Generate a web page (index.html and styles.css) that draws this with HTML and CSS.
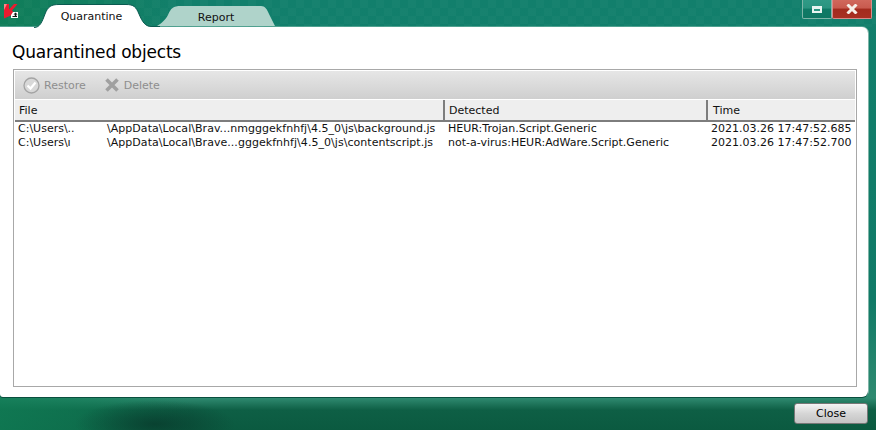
FILE: index.html
```html
<!DOCTYPE html>
<html lang="en">
<head>
<meta charset="utf-8">
<title>Quarantine</title>
<link rel="stylesheet" href="styles.css">
</head>
<body>
<div class="window">
  <header class="titlebar">
    <svg class="logo" width="18" height="18" viewBox="0 0 18 18">
      <path d="M1 2H6V7.500L11 2H14.500L9 8.500L11.500 11H9V13L1 16.500Z" fill="#ea1b2f"/>
      <path d="M1 2H4L1 8Z" fill="#ff8286"/>
      <path d="M10 10h5v6H8v-3z" fill="#fff"/>
      <path d="M12.500 10.500l2 2h-1.200v1.500h.7v1H9.500v-1h2.300v-1.500h-1.300z" fill="#151515"/>
    </svg>
    <div class="tabs">
      <div class="tab tab-active">
        <svg class="tab-shape" width="126" height="28" viewBox="0 0 126 28">
          <path class="tab-fill" d="M-34 27.500H0C6 27.500 8 22 11 14C14 6.500 17 4.500 25 4.500H92C100 4.500 102 7 105 14C108.500 22 111 27.500 120 27.500H126V28H-34Z"/>
          <path class="tab-edge" d="M0 27.500C6 27.500 8 22 11 14C14 6.500 17 4.500 25 4.500H92C100 4.500 102 7 105 14C108.500 22 111 26.500 118 26.500H126"/>
        </svg>
        <span class="tab-label">Quarantine</span>
      </div>
      <div class="tab tab-idle">
        <svg class="tab-shape" width="120" height="21" viewBox="0 0 120 21">
          <path d="M0 20C4 18 9 13 11 9C14 2 16 0 24 0H104C108 0 110 3 112 8L118 20Z" fill="#afd3ca"/>
        </svg>
        <span class="tab-label">Report</span>
      </div>
    </div>
    <div class="window-buttons">
      <button class="win-btn win-restore" aria-label="Restore window"><span class="restore-glyph"></span></button>
      <button class="win-btn win-close" aria-label="Close window">
        <svg width="12" height="10" viewBox="0 0 12 10"><path d="M1.500 .5l9 9M10.500 .5l-9 9" stroke="#f6efe8" stroke-width="3"/></svg>
      </button>
    </div>
  </header>

  <main class="panel">
    <h1 class="heading">Quarantined objects</h1>
    <section class="listbox">
      <div class="toolbar">
        <span class="tool">
          <svg width="17" height="17" viewBox="0 0 17 17"><circle cx="8.500" cy="8.500" r="7.500" fill="#d8d8d8" stroke="#a4a4a4" stroke-width="1.300"/><path d="M4.500 8.500l3 3 5-6" fill="none" stroke="#fff" stroke-width="2.200"/></svg>
          <span>Restore</span>
        </span>
        <span class="tool">
          <svg width="16" height="16" viewBox="0 0 16 16"><path d="M2.500 2.500l11 11M13.500 2.500l-11 11" stroke="#a0a0a0" stroke-width="3.600"/></svg>
          <span>Delete</span>
        </span>
      </div>
      <div class="row header-row">
        <div class="col">File</div>
        <div class="col">Detected</div>
        <div class="col">Time</div>
      </div>
      <div class="row data-row">
        <div class="file-cell"><span class="user">C:\Users\..</span><span class="path">\AppData\Local\Brav...nmgggekfnhfj\4.5_0\js\background.js</span></div>
        <div class="cell">HEUR:Trojan.Script.Generic</div>
        <div class="cell">2021.03.26 17:47:52.685</div>
      </div>
      <div class="row data-row">
        <div class="file-cell"><span class="user">C:\Users\ı</span><span class="path">\AppData\Local\Brave...gggekfnhfj\4.5_0\js\contentscript.js</span></div>
        <div class="cell">not-a-virus:HEUR:AdWare.Script.Generic</div>
        <div class="cell">2021.03.26 17:47:52.700</div>
      </div>
    </section>
  </main>

  <footer class="footer">
    <button class="close-btn">Close</button>
  </footer>
</div>
</body>
</html>
```
FILE: styles.css
```css
* { box-sizing: border-box; }
html, body { margin: 0; height: 100%; overflow: hidden; }
body { font-family: "DejaVu Sans", Tahoma, sans-serif; font-size: 11px; color: #111; }

.window {
  width: 876px;
  height: 430px;
  display: flex;
  flex-direction: column;
  background:
    radial-gradient(ellipse 80px 24px at 155px 424px, rgba(8,58,44,.8), rgba(8,58,44,0)),
    linear-gradient(90deg, rgba(16,125,85,.8) 0, rgba(16,125,85,.6) 70px, rgba(16,125,85,0) 190px),
    linear-gradient(180deg, #127f6c 0, #107a67 300px, #2f8a70 398px, #0e5f45 410px, #0b5a40 430px);
}

.titlebar {
  height: 27px;
  display: flex;
  flex: none;
  position: relative;
  background: repeating-conic-gradient(rgba(255,255,255,.02) 0 25%, rgba(255,255,255,0) 0 50%) 0 0 / 16px 16px;
}
.logo { margin: 2px 0 0 3px; flex: none; }
.tabs { display: flex; margin-left: 13px; }
.tab { position: relative; height: 27px; }
.tab-active { width: 116px; margin-right: 7px; z-index: 1; }
.tab-idle { width: 118px; margin-top: 6px; height: 21px; }
.tab-shape { position: absolute; left: 0; top: 0; display: block; overflow: visible; }
.tab-fill { fill: #fff; }
.tab-edge { fill: none; stroke: #0a5a50; }
.tab-label { position: relative; display: block; text-align: center; }
.tab-active .tab-label { padding: 10px 1px 0 0; }
.tab-idle .tab-label { padding-top: 5px; }

.window-buttons { margin-left: auto; margin-right: 4px; display: flex; height: 19px; }
.win-btn {
  border: 1px solid #7fb5a8;
  border-top: 0;
  padding: 0;
  display: flex;
  align-items: center;
  justify-content: center;
  border-radius: 0 0 2px 2px;
}
.win-restore { width: 30px; background: linear-gradient(180deg, #2f9a86 0, #2b9480 45%, #0f7a66 50%, #0f7763 100%); }
.win-close { width: 40px; border-color: #d98a8a; background: linear-gradient(180deg, #d0685c 0, #c85a4e 45%, #a32b1e 50%, #a82f22 100%); }
.restore-glyph { width: 10px; height: 7px; border: 2px solid #e8f4f0; border-top-width: 3px; background: #2b9480; display: block; }

.panel {
  flex: 1;
  margin-right: 8px;
  background: #fff;
  border-radius: 0 6px 6px 3px;
  padding: 14px 11px 10px 13px;
  box-shadow: 0 1px 0 #0a4f3e, 1px 0 0 #7fb5a8, 0 -1px 0 #4fa08f;
  display: flex;
  flex-direction: column;
  min-height: 0;
}
.heading { margin: 0 0 6px -1px; font-size: 17px; line-height: 22px; font-weight: 400; color: #000; letter-spacing: -.2px; }

.listbox { flex: 1; border: 1px solid #a8a8a8; padding: 1px 1px 0; min-height: 0; }
.toolbar {
  height: 28px;
  display: flex;
  align-items: center;
  gap: 18px;
  padding: 0 0 0 8px;
  background: linear-gradient(180deg, #e6e6e6, #cfcfcf);
  color: #8e8e8e;
}
.tool { display: flex; align-items: center; gap: 4px; }

.row { display: grid; grid-template-columns: 430px 263px 149px; }
.header-row { height: 23px; background: #eeeeee; border-top: 1px solid #fff; border-bottom: 2px solid #7d7d7d; }
.col { padding: 4px 0 0 4px; border-right: 2px solid #7d7d7d; color: #111; }
.col:last-child { border-right: 0; padding-left: 5px; }
.data-row { height: 14px; line-height: 14px; white-space: nowrap; }
.file-cell { padding-left: 3px; display: flex; }
.user { width: 89px; overflow: hidden; }
.path { letter-spacing: .04px; }
.cell { padding-left: 3px; overflow: hidden; }

.footer { height: 33px; flex: none; display: flex; justify-content: flex-end; align-items: flex-start; padding: 6px 8px 0 0; }
.close-btn {
  width: 74px;
  height: 21px;
  font: 11px "DejaVu Sans", Tahoma, sans-serif;
  color: #000;
  border: 1px solid #777;
  border-radius: 3px;
  background: linear-gradient(180deg, #f4f4f4, #d6d6d6 50%, #c4c4c4);
  padding: 0;
}
```
